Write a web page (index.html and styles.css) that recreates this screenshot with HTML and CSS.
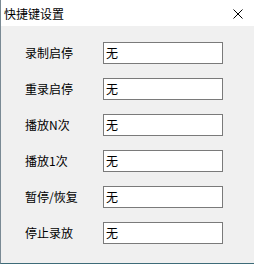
FILE: index.html
```html
<!DOCTYPE html>
<html lang="zh">
<head>
<meta charset="utf-8">
<title>快捷键设置</title>
<link rel="stylesheet" href="styles.css">
</head>
<body>
<div class="window">
  <div class="titlebar">
    <span class="title">快捷键设置</span>
    <span class="close">
      <svg width="10" height="10" viewBox="0 0 10 10"><path d="M0.5 0.5 L9.5 9.5 M9.5 0.5 L0.5 9.5" stroke="#000" stroke-width="1" fill="none"/></svg>
    </span>
  </div>
  <div class="content">
    <div class="row"><span class="label">录制启停</span><div class="field">无</div></div>
    <div class="row"><span class="label">重录启停</span><div class="field">无</div></div>
    <div class="row"><span class="label">播放N次</span><div class="field">无</div></div>
    <div class="row"><span class="label">播放1次</span><div class="field">无</div></div>
    <div class="row"><span class="label">暂停/恢复</span><div class="field">无</div></div>
    <div class="row"><span class="label">停止录放</span><div class="field">无</div></div>
  </div>
</div>
</body>
</html>
```
FILE: styles.css
```css
html, body {
  margin: 0;
  padding: 0;
  background: #f0f0f0;
}
.window {
  width: 254px;
  height: 264px;
  box-sizing: border-box;
  border-left: 1px solid #7a8a94;
  border-bottom: 1px solid #3d6b78;
  background: #f0f0f0;
  font-family: "Noto Sans CJK SC", "Microsoft YaHei", sans-serif;
  font-size: 12px;
  color: #000;
  display: flex;
  flex-direction: column;
}
.titlebar {
  height: 26px;
  background: #fff;
  display: flex;
  align-items: center;
  justify-content: space-between;
  padding: 0 11px 0 3px;
}
.title {
  font-size: 12px;
  line-height: 14px;
  margin-top: 1px;
}
.close {
  display: flex;
  width: 10px;
  height: 10px;
  margin-top: 1px;
}
.content {
  display: flex;
  flex-direction: column;
  gap: 14px;
  padding: 16px 0 0 24px;
}
.row {
  display: flex;
  align-items: center;
  height: 22px;
}
.label {
  width: 78px;
  line-height: 14px;
}
.field {
  width: 120px;
  height: 22px;
  box-sizing: border-box;
  border: 1px solid #7a7a7a;
  background: #fff;
  padding-left: 2px;
  line-height: 20px;
}
```
